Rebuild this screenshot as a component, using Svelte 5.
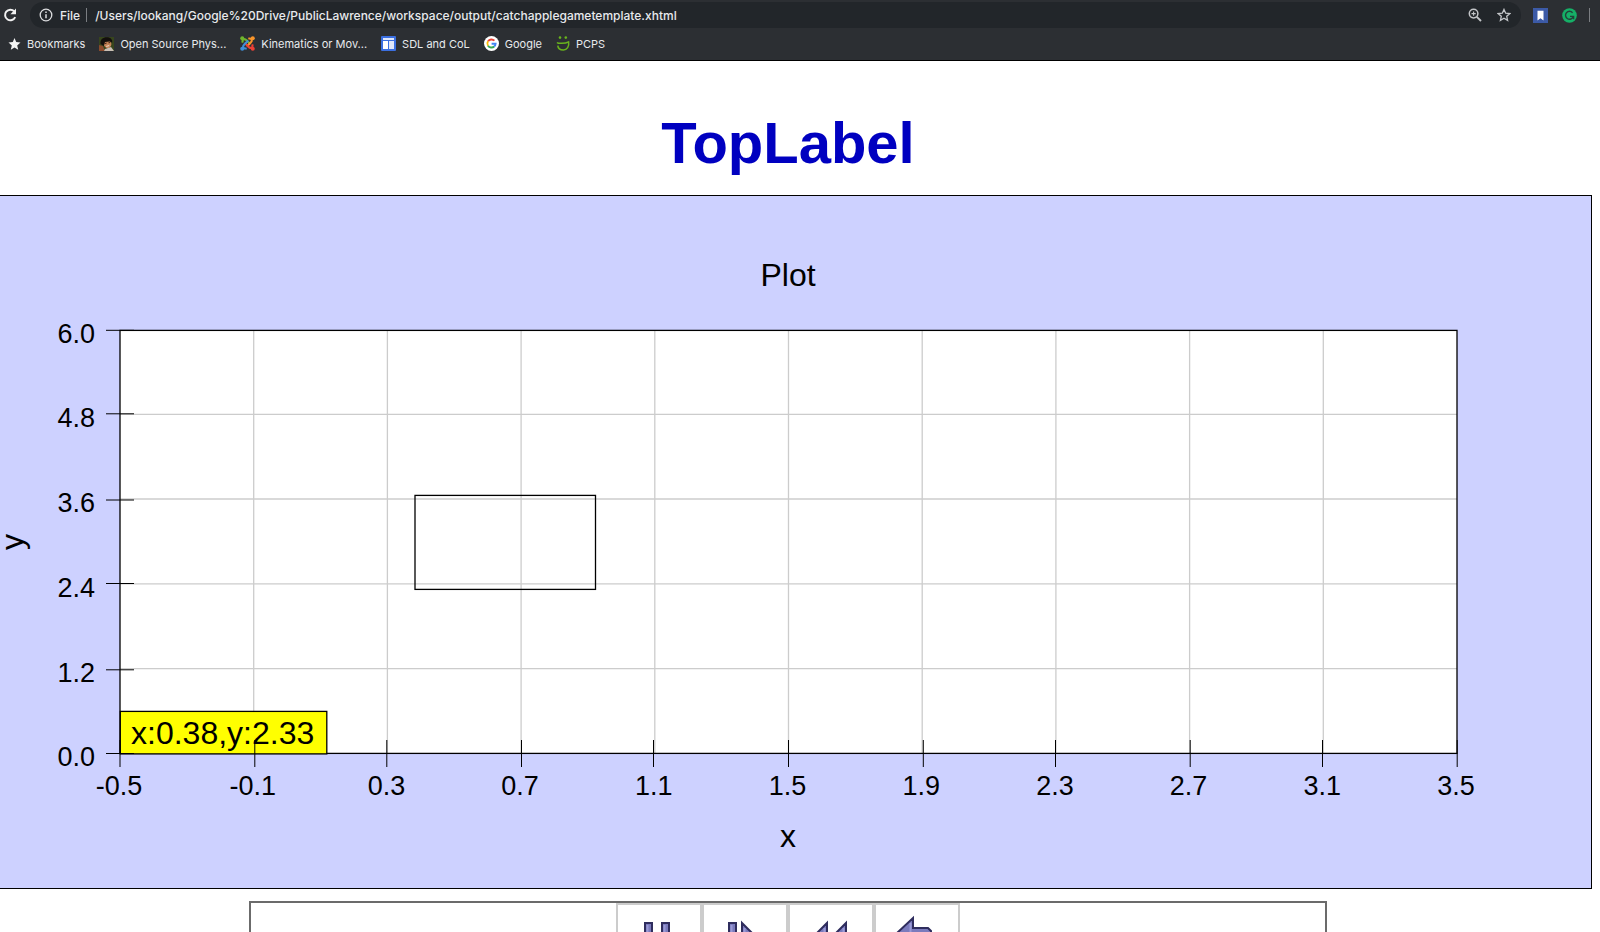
<script lang="ts">
  interface Tick {
    label: string;
    grid: number;
    tick: number;
  }

  // view size of the drawing panel
  const W = 1608;
  const H = 694;

  // plot frame inside the panel
  const frame = { left: 136, right: 1473, top: 135, bottom: 558 };

  const xTicks: Tick[] = [
    { label: '-0.5', grid: 136, tick: 136 },
    { label: '-0.1', grid: 269.7, tick: 270.8 },
    { label: '0.3', grid: 403.4, tick: 402.8 },
    { label: '0.7', grid: 537.1, tick: 537.5 },
    { label: '1.1', grid: 670.8, tick: 669.5 },
    { label: '1.5', grid: 804.5, tick: 804.5 },
    { label: '1.9', grid: 938.2, tick: 939.3 },
    { label: '2.3', grid: 1071.9, tick: 1071.5 },
    { label: '2.7', grid: 1205.6, tick: 1206.2 },
    { label: '3.1', grid: 1339.3, tick: 1338.5 },
    { label: '3.5', grid: 1473, tick: 1473.2 },
  ];

  const yTicks: Tick[] = [
    { label: '6.0', grid: 135, tick: 135.3 },
    { label: '4.8', grid: 219.3, tick: 218.8 },
    { label: '3.6', grid: 304, tick: 305 },
    { label: '2.4', grid: 388.8, tick: 388.5 },
    { label: '1.2', grid: 473.6, tick: 474.8 },
    { label: '0.0', grid: 558.4, tick: 558.5 },
  ];

  const bookmarks = [
    { id: 'star', label: 'Bookmarks' },
    { id: 'photo', label: 'Open Source Phys...' },
    { id: 'joomla', label: 'Kinematics or Mov...' },
    { id: 'sites', label: 'SDL and CoL' },
    { id: 'google', label: 'Google' },
    { id: 'smile', label: 'PCPS' },
  ];

  const actions = [
    { id: 'pause', label: 'Pause' },
    { id: 'step', label: 'Step' },
    { id: 'rewind', label: 'Initialize' },
    { id: 'reset', label: 'Reset' },
  ];

  let url = $state(
    '/Users/lookang/Google%20Drive/PublicLawrence/workspace/output/catchapplegametemplate.xhtml',
  );
  let point = $state({ x: 0.38, y: 2.33 });
</script>

<div class="window">
  <header class="browser">
    <div class="toolbar">
      <button class="tool" aria-label="Reload">
        <svg width="16" height="16" viewBox="0 0 16 16">
          <path d="M13.2 10.2A5.3 5.3 0 1 1 12.2 4.3" fill="none" stroke="#f1f1f1" stroke-width="2" />
          <path d="M14 1.6v5.6H8.4z" fill="#f1f1f1" />
        </svg>
      </button>
      <div class="address">
        <svg width="14" height="14" viewBox="0 0 14 14">
          <circle cx="7" cy="7" r="5.8" fill="none" stroke="#dcdddf" stroke-width="1.3" />
          <path d="M7 6.2v4M7 3.6v1.4" stroke="#dcdddf" stroke-width="1.5" />
        </svg>
        <label for="url">File</label>
        <span class="rule"></span>
        <input id="url" type="text" spellcheck="false" bind:value={url} />
        <button class="tool" aria-label="Zoom">
          <svg width="14" height="14" viewBox="0 0 14 14">
            <circle cx="5.6" cy="5.6" r="4.3" fill="none" stroke="#c3c5c8" stroke-width="1.5" />
            <path d="M8.8 8.8l4.2 4.2" stroke="#c3c5c8" stroke-width="1.9" />
            <path d="M5.6 3.5v4.2M3.5 5.6h4.2" stroke="#c3c5c8" stroke-width="1.1" />
          </svg>
        </button>
        <button class="tool" aria-label="Bookmark this page">
          <svg width="14" height="14" viewBox="0 0 14 14">
            <path
              d="M7 1.4l1.7 3.8 4.1.4-3.1 2.7.9 4.1L7 10.3l-3.6 2.1.9-4.1-3.1-2.7 4.1-.4z"
              fill="none"
              stroke="#c3c5c8"
              stroke-width="1.3"
            />
          </svg>
        </button>
      </div>
      <div class="extensions">
        <button class="tool" aria-label="Reading list">
          <svg width="15" height="15" viewBox="0 0 15 15">
            <rect width="15" height="15" fill="#3c5aa6" />
            <path d="M4.5 2.7h6v9.8l-3-2.3-3 2.3z" fill="#fff" />
          </svg>
        </button>
        <button class="tool" aria-label="Writing assistant">
          <svg width="15" height="15" viewBox="0 0 15 15">
            <circle cx="7.5" cy="7.5" r="7.3" fill="#15b067" />
            <path
              d="M10.6 4.7A4 4 0 1 0 11.3 8.6M8 8.4h3.6v2.9"
              fill="none"
              stroke="#23423a"
              stroke-width="1.4"
            />
          </svg>
        </button>
        <span class="rule"></span>
      </div>
    </div>

    <nav class="bookmarks">
      {#each bookmarks as b (b.id)}
        <a href="#{b.id}">
          {#if b.id === 'star'}
            <svg width="13" height="14" viewBox="0 0 12 14">
              <path d="M6 1l1.7 4.1 4.3.4-3.3 2.9 1 4.3L6 10.4l-3.7 2.3 1-4.3L0 5.5l4.3-.4z" fill="#f4f4f4" />
            </svg>
          {:else if b.id === 'photo'}
            <svg width="15" height="14" viewBox="0 0 15 14">
              <rect width="15" height="14" fill="#37451d" />
              <path d="M0 8l4 1 2 5H0z" fill="#8a4a2c" />
              <ellipse cx="8.4" cy="6.6" rx="3.9" ry="4.6" fill="#c58457" transform="rotate(-18 8.4 6.6)" />
              <path d="M1.6 7C.8 2 4.6 0 8 .2c3.4.1 5.6 2 5.2 5.3L10.6 4.4 6 5 4.8 9z" fill="#130f0c" />
              <path d="M5.6 6.6l2-.5M9.5 5.8l1.8-.2" stroke="#3a2012" stroke-width="1" />
              <path d="M7.2 9.4l3-.8" stroke="#f0ddcf" stroke-width="1" />
              <path d="M6 12L12 10l3 4H5z" fill="#c9bfb5" />
            </svg>
          {:else if b.id === 'joomla'}
            <svg width="15" height="15" viewBox="0 0 14 14" fill="none" stroke-width="2">
              <path d="M2.6 6.2C2 4.6 2.4 3 3.9 2.9c1-.1 1.6.5 2.2 1.1l3.6 3.6" stroke="#6fb52c" />
              <path d="M7.8 2.6c1.6-.6 3.2-.2 3.3 1.3.1 1-.5 1.6-1.1 2.2L6.4 9.7" stroke="#f9952a" />
              <path d="M11.4 7.8c.6 1.6.2 3.2-1.3 3.3-1 .1-1.6-.5-2.2-1.1L4.3 6.4" stroke="#ee4035" />
              <path d="M6.2 11.4c-1.6.6-3.2.2-3.3-1.3-.1-1 .5-1.6 1.1-2.2l3.6-3.6" stroke="#3d8fd8" />
              <circle cx="2.1" cy="2.1" r="1.9" fill="#6fb52c" />
              <circle cx="11.9" cy="2.1" r="1.9" fill="#f9952a" />
              <circle cx="11.9" cy="11.9" r="1.9" fill="#ee4035" />
              <circle cx="2.1" cy="11.9" r="1.9" fill="#3d8fd8" />
            </svg>
          {:else if b.id === 'sites'}
            <svg width="15" height="15" viewBox="0 0 15 15">
              <rect width="15" height="15" rx="1" fill="#3b6fe0" />
              <rect x="2" y="2" width="11" height="2" fill="#dfe7fb" />
              <rect x="2" y="5" width="5" height="8" fill="#fff" />
              <rect x="8" y="5" width="5" height="8" fill="#dfe7fb" />
            </svg>
          {:else if b.id === 'google'}
            <svg width="15" height="15" viewBox="0 0 15 15" fill="none" stroke-width="1.9">
              <circle cx="7.5" cy="7.5" r="7.5" fill="#fff" />
              <path d="M10.4 4.7A4.1 4.1 0 0 0 4 5.3" stroke="#ea4335" />
              <path d="M4 5.3a4.1 4.1 0 0 0 0 4.4" stroke="#fbbc05" />
              <path d="M4 9.7a4.1 4.1 0 0 0 6.2.8" stroke="#34a853" />
              <path d="M10.2 10.5A4.1 4.1 0 0 0 11.6 7.7H7.6" stroke="#4285f4" />
            </svg>
          {:else}
            <svg width="14" height="15" viewBox="0 0 14 15">
              <circle cx="4" cy="1.6" r="1.3" fill="#68b31c" />
              <circle cx="9.8" cy="1.6" r="1.3" fill="#68b31c" />
              <path
                d="M1 6.4c1 1.2 8 1.4 11.6-.6C13.4 10.6 11 14 7.4 14 4 14 2 12.2 1.8 9.6"
                fill="none"
                stroke="#68b31c"
                stroke-width="1.5"
              />
            </svg>
          {/if}
          <span>{b.label}</span>
        </a>
      {/each}
    </nav>
  </header>

  <main>
    <h1>TopLabel</h1>

    <svg class="panel" viewBox="0 0 {W} {H}" role="img" aria-label="Plot of y against x">
      <text x={W / 2} y="91" class="title">Plot</text>

      <rect
        x={frame.left}
        y={frame.top}
        width={frame.right - frame.left}
        height={frame.bottom - frame.top}
        fill="#fff"
      />
      <g class="grid">
        {#each xTicks.slice(1, -1) as t (t.label)}
          <line x1={t.grid} x2={t.grid} y1={frame.top} y2={frame.bottom} />
        {/each}
        {#each yTicks.slice(1, -1) as t (t.label)}
          <line x1={frame.left} x2={frame.right} y1={t.grid} y2={t.grid} />
        {/each}
      </g>

      <rect
        x={frame.left}
        y={frame.top + 0.4}
        width={frame.right - frame.left}
        height={frame.bottom - frame.top}
        class="outline"
      />
      <rect x="431" y="300.4" width="180.5" height="94" class="outline" />

      <!-- mouse coordinates -->
      <rect x={frame.left + 0.3} y="516.4" width="206.5" height="42.5" class="coords" />
      <text x="147" y="549" class="coords-text">x:{point.x},y:{point.y}</text>

      <g class="ticks">
        {#each xTicks as t (t.label)}
          <line x1={t.tick} x2={t.tick} y1={frame.bottom - 13} y2={frame.bottom + 14} />
        {/each}
        {#each yTicks as t (t.label)}
          <line x1={frame.left - 14} x2={frame.left + 14} y1={t.tick} y2={t.tick} />
        {/each}
      </g>

      {#each xTicks as t (t.label)}
        <text x={t.grid - 1} y="600" class="x-label">{t.label}</text>
      {/each}
      {#each yTicks as t (t.label)}
        <text x="111" y={t.grid + 13} class="y-label">{t.label}</text>
      {/each}

      <text x={W / 2} y="652" class="title">x</text>
      <text transform="translate(39 347) rotate(-90)" class="title">y</text>
    </svg>

    <div class="controls">
      {#each actions as a (a.id)}
        <button aria-label={a.label}>
          <svg width="48" height="48" viewBox="0 0 48 48">
            {#if a.id === 'pause'}
              <path d="M10 10h7v28h-7zM27 10h7v28h-7z" />
              <path d="M12.5 12v24M29.5 12v24" class="shine" />
            {:else if a.id === 'step'}
              <path d="M8 10h7v28H8zM21 10l14 14-14 14z" />
              <path d="M10.5 12v24M23.5 15v18" class="shine" />
            {:else if a.id === 'rewind'}
              <path d="M20 10v28L6 24zM39 10v28L25 24z" />
              <path d="M17.5 15v18M36.5 15v18" class="shine" />
            {:else}
              <path d="M20 5v10h15l3 3v22h-8V25H20v10L4 20z" />
              <path d="M17.5 10v20" class="shine" />
            {/if}
          </svg>
        </button>
      {/each}
    </div>
  </main>
</div>

<style>
  :global(body) {
    margin: 0;
    background: #fff;
  }
  .window {
    height: 100vh;
    overflow: hidden;
    font-family: 'Liberation Sans', Arial, sans-serif;
  }
  button {
    margin: 0;
    cursor: pointer;
  }

  .browser {
    background: #2c2f33;
    border-bottom: 1px solid #000;
    color: #e8eaed;
    font-family: Inter, Roboto, sans-serif;
  }
  .toolbar {
    display: flex;
    align-items: center;
    gap: 12px;
    height: 30px;
    padding: 0 10px 0 2px;
  }
  .tool {
    display: flex;
    padding: 0;
    border: 0;
    background: none;
  }
  .address {
    flex: 1;
    display: flex;
    align-items: center;
    height: 26px;
    padding: 0 10px 0 9px;
    border-radius: 13px;
    background: #22262a;
    font-size: 12px;
    font-weight: 500;
  }
  .address label {
    margin: 0 6px 0 7px;
  }
  .address input {
    flex: 1;
    min-width: 0;
    margin: 0 8px;
    padding: 0;
    border: 0;
    outline: 0;
    background: none;
    color: inherit;
    font: inherit;
  }
  .address .tool + .tool {
    margin-left: 15px;
  }
  .rule {
    width: 1px;
    height: 14px;
    background: #7b7e82;
  }
  .extensions {
    display: flex;
    align-items: center;
    gap: 14px;
  }
  .extensions .rule {
    margin-left: -2px;
  }
  .bookmarks {
    display: flex;
    align-items: center;
    gap: 14px;
    height: 27px;
    padding: 0 8px 3px;
  }
  .bookmarks a {
    display: flex;
    align-items: center;
    gap: 6px;
    color: inherit;
    font-size: 11px;
    text-decoration: none;
    white-space: nowrap;
  }

  /* the page is scrolled, its left edge runs out of the window */
  main {
    margin: 0 8px 0 -16px;
  }
  h1 {
    margin: 0;
    padding: 48px 0 18px;
    color: #0000c0;
    font-size: 58px;
    line-height: 68px;
    text-align: center;
  }

  .panel {
    display: block;
    width: 100%;
    height: auto;
    background: #cdd1ff;
    outline: 1px solid #000;
    outline-offset: -1px;
  }
  .grid line {
    stroke: #ccc;
    stroke-width: 1.3;
  }
  .outline {
    fill: none;
    stroke: #000;
    stroke-width: 1.3;
  }
  .coords {
    fill: #ff0;
    stroke: #000;
    stroke-width: 1.3;
  }
  .ticks line {
    stroke: #000;
  }
  .title,
  .coords-text {
    font-size: 32px;
  }
  .title,
  .x-label {
    text-anchor: middle;
  }
  .x-label,
  .y-label {
    font-size: 27px;
  }
  .y-label {
    text-anchor: end;
  }

  .controls {
    display: flex;
    justify-content: center;
    box-sizing: border-box;
    width: 67%;
    margin: 12px auto 0;
    border: 2px solid #6b6b6b;
  }
  .controls button {
    display: flex;
    justify-content: center;
    width: 86px;
    padding: 8px 0;
    border: 2px solid #ccc;
    background: #fff;
  }
  .controls path {
    fill: #7b7bbd;
    stroke: #2f2d5e;
    stroke-width: 2;
  }
  .controls .shine {
    fill: none;
    stroke: #9a9ad6;
  }
</style>
